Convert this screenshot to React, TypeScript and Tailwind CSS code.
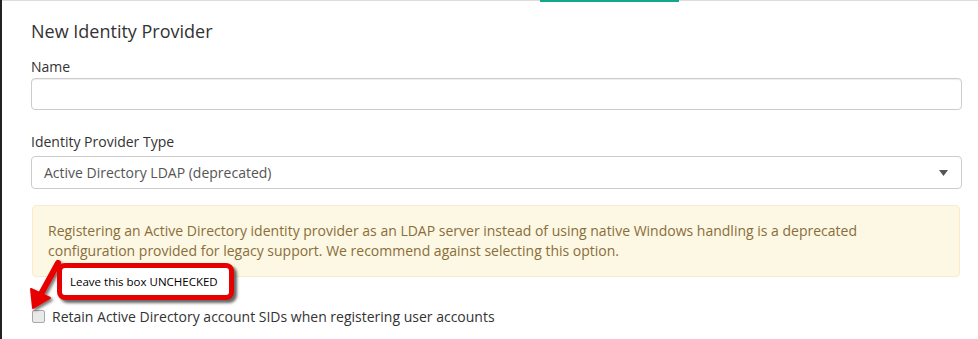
import React from "react";

const App = () => {
  return (
    <div className="relative w-[978px] h-[339px] overflow-hidden bg-white border-l-2 border-[#222] font-['Open_Sans',sans-serif]">
      {/* top tab bar line */}
      <div className="h-px bg-[#dcdcdc]" />
      <div className="absolute left-[538px] top-0 w-[139px] h-[2px] bg-[#14a88a]" />

      <div className="pl-[29px] pr-[16px] pt-[18px]">
        <h2 className="text-[18px] leading-[24px] text-[#333]">New Identity Provider</h2>

        <label className="block mt-[15px] text-[14px] leading-[18px] text-[#333]">Name</label>
        <input
          type="text"
          className="block mt-[2px] w-full h-[32px] rounded-[4px] border border-[#ccc] shadow-[inset_0_1px_1px_rgba(0,0,0,0.075)]"
        />

        <label className="block mt-[23px] text-[14px] leading-[18px] text-[#333]">Identity Provider Type</label>
        <div className="mt-[5px] h-[33px] rounded-[4px] border border-[#ccc] flex items-center justify-between pl-[12px] pr-[13px]">
          <span className="text-[14px] text-[#555]">Active Directory LDAP (deprecated)</span>
          <svg width="9" height="6" viewBox="0 0 9 6">
            <path d="M0 0h9L4.5 6z" fill="#555" />
          </svg>
        </div>

        <div className="mt-[16px] ml-px mr-[2px] rounded-[4px] border border-[#faebcc] bg-[#fcf8e3] px-[15px] py-[15px] text-[14px] leading-[20px] text-[#8a6d3b]">
          Registering an Active Directory identity provider as an LDAP server instead of using native Windows handling is a deprecated
          <br />
          configuration provided for legacy support. We recommend against selecting this option.
        </div>

        <label className="flex items-center mt-[29px] ml-px text-[14px] text-[#333]">
          <span className="w-[13px] h-[13px] rounded-[2px] border border-[#a9a9a9] bg-[#e9e9e9]" />
          <span className="ml-[7px]">Retain Active Directory account SIDs when registering user accounts</span>
        </label>
      </div>

      {/* callout annotation */}
      <svg className="absolute left-0 top-0" width="978" height="339">
        <defs>
          <filter id="sh" x="-20%" y="-20%" width="160%" height="160%">
            <feDropShadow dx="2" dy="2" stdDeviation="1.5" floodColor="#000" floodOpacity="0.55" />
          </filter>
        </defs>
        <g filter="url(#sh)">
          <path d="M56 263 L39 294" stroke="#e60000" strokeWidth="6" strokeLinecap="round" />
          <path d="M29 289 L31 308 L48 298 Z" fill="#e60000" stroke="#e60000" strokeWidth="2" strokeLinejoin="round" />
        </g>
      </svg>
      <div className="absolute left-[55px] top-[263px] w-[177px] h-[37px] rounded-[8px] border-[5px] border-[#e60000] bg-white shadow-[3px_3px_3px_rgba(0,0,0,0.6)] flex items-center pl-[8px] text-[11.5px] text-black font-['Open_Sans',sans-serif]">
        Leave this box UNCHECKED
      </div>
    </div>
  );
};

export default App;
